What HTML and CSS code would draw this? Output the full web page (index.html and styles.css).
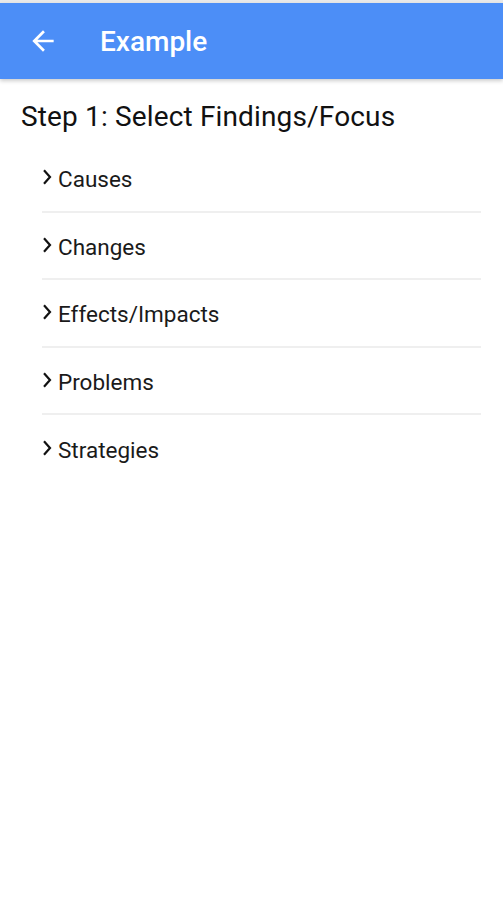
FILE: index.html
```html
<!DOCTYPE html>
<html>
<head>
<meta charset="utf-8">
<link rel="stylesheet" href="styles.css">
</head>
<body>
<div class="status"></div>
<header class="appbar">
  <svg class="back" width="32" height="32" viewBox="0 0 24 24"><path d="M20 11H7.83l5.59-5.59L12 4l-8 8 8 8 1.41-1.41L7.83 13H20v-2z" fill="#fff"/></svg>
  <h1 class="title">Example</h1>
</header>
<main class="content">
  <h2 class="step">Step 1: Select Findings/Focus</h2>
  <ul class="list">
    <li class="item"><svg class="chev" width="10" height="16" viewBox="0 0 10 16"><path d="M2 1.2l6 6.8-6 6.8" fill="none" stroke="#111" stroke-width="2.2"/></svg><span>Causes</span></li>
    <li class="item"><svg class="chev" width="10" height="16" viewBox="0 0 10 16"><path d="M2 1.2l6 6.8-6 6.8" fill="none" stroke="#111" stroke-width="2.2"/></svg><span>Changes</span></li>
    <li class="item"><svg class="chev" width="10" height="16" viewBox="0 0 10 16"><path d="M2 1.2l6 6.8-6 6.8" fill="none" stroke="#111" stroke-width="2.2"/></svg><span>Effects/Impacts</span></li>
    <li class="item"><svg class="chev" width="10" height="16" viewBox="0 0 10 16"><path d="M2 1.2l6 6.8-6 6.8" fill="none" stroke="#111" stroke-width="2.2"/></svg><span>Problems</span></li>
    <li class="item last"><svg class="chev" width="10" height="16" viewBox="0 0 10 16"><path d="M2 1.2l6 6.8-6 6.8" fill="none" stroke="#111" stroke-width="2.2"/></svg><span>Strategies</span></li>
  </ul>
</main>
</body>
</html>
```
FILE: styles.css
```css
html, body {
  margin: 0;
  padding: 0;
  background: #fff;
  font-family: Roboto, "Liberation Sans", sans-serif;
}
.status {
  height: 3px;
  background: #e9e9e9;
}
.appbar {
  height: 76px;
  background: #4c8ef7;
  display: flex;
  align-items: center;
  padding-left: 27px;
  box-shadow: 0 2px 4px rgba(0,0,0,0.2);
  position: relative;
}
.back {
  flex: none;
}
.title {
  margin: 2px 0 0 41px;
  color: #fff;
  font-size: 28px;
  font-weight: 500;
  line-height: 36px;
}
.content {
  padding: 20px 22px 0 21px;
}
.step {
  margin: 0;
  font-size: 28px;
  font-weight: 400;
  letter-spacing: 0.15px;
  color: #111;
  line-height: 36px;
}
.list {
  list-style: none;
  margin: 10px 0 0 21px;
  padding: 0;
}
.item {
  display: flex;
  align-items: center;
  box-sizing: border-box;
  height: 67.5px;
  padding-top: 3px;
  border-bottom: 2px solid #efefef;
  font-size: 22.5px;
  color: #1a1a1a;
}
.item.last {
  border-bottom: none;
}
.chev {
  flex: none;
  margin-right: 6px;
  margin-top: -4px;
}
```
